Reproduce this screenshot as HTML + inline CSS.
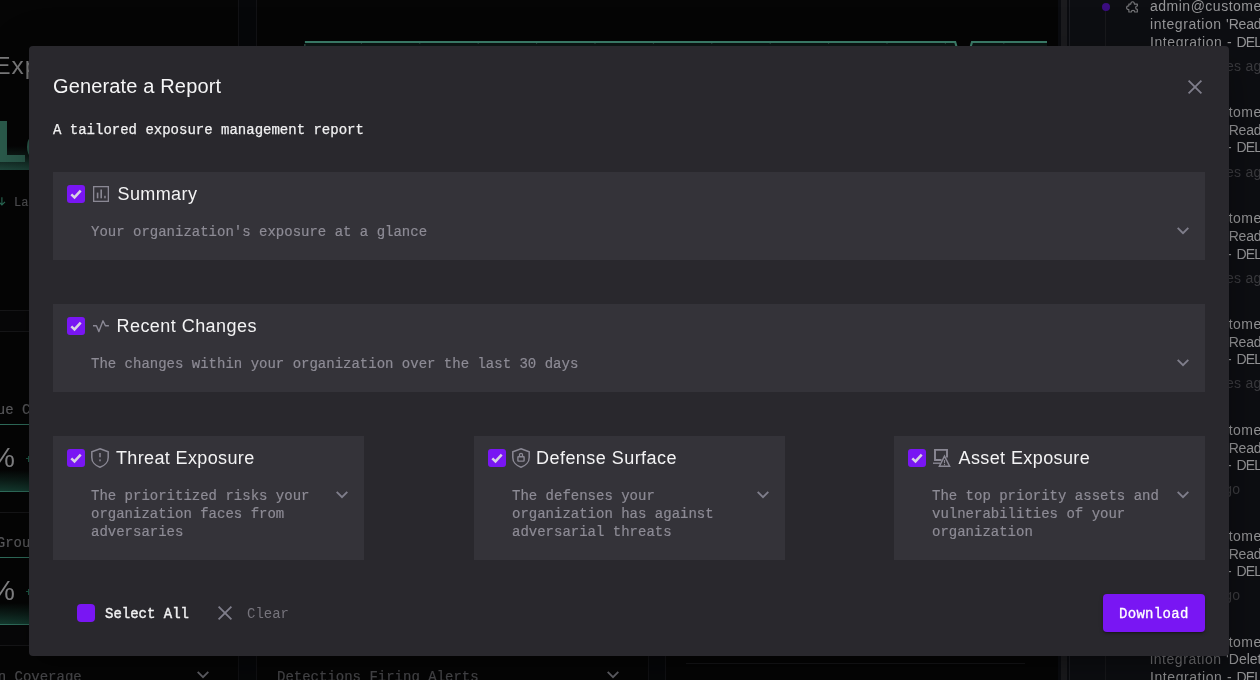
<!DOCTYPE html>
<html>
<head>
<meta charset="utf-8">
<title>Generate a Report</title>
<style>
*{box-sizing:border-box;margin:0;padding:0}
html,body{width:1260px;height:680px;overflow:hidden;background:#050505}
body{position:relative;font-family:"Liberation Sans",sans-serif;color:#eee}
.abs{position:absolute}
.mono{font-family:"Liberation Mono",monospace}
.sans{font-family:"Liberation Sans",sans-serif}
.t{position:absolute;white-space:nowrap}
/* ---------- background (dimmed dashboard) ---------- */
#bg{will-change:transform;position:absolute;left:0;top:0;width:1260px;height:680px;background:#050505;overflow:hidden}
.bgm{position:absolute;white-space:nowrap;font-family:"Liberation Mono",monospace;font-size:14px;line-height:18px;color:#4f4f52;-webkit-text-stroke:0.2px currentColor}
.gl{position:absolute;height:1px;background:#2f6e5c}
.hl{position:absolute;height:1px;background:#161618}
.vl{position:absolute;width:1px;background:#161618}
.feed{position:absolute;left:1150px;white-space:nowrap;font-family:"Liberation Sans",sans-serif;font-size:14px;line-height:18px;color:#969698;letter-spacing:0.57px}
.ago{position:absolute;white-space:nowrap;font-family:"Liberation Sans",sans-serif;font-size:14px;line-height:18px;color:#3b3b3f;letter-spacing:0.25px}
/* ---------- modal ---------- */
#modal{will-change:transform;position:absolute;left:29px;top:46px;width:1200px;height:610px;background:#29282d;border-radius:4px;box-shadow:0 11px 15px -7px rgba(0,0,0,.2),0 24px 38px 3px rgba(0,0,0,.14),0 9px 46px 8px rgba(0,0,0,.12)}
.card{position:absolute;background:#343339}
.cb{position:absolute;width:18px;height:18px;border-radius:3px;background:#7916f3}
.cb svg{position:absolute;left:0;top:0}
.ttl{position:absolute;white-space:nowrap;font-family:"Liberation Sans",sans-serif;font-size:18px;line-height:24px;letter-spacing:0.3px;color:#f3f3f4}
.desc{position:absolute;font-family:"Liberation Mono",monospace;font-size:14px;line-height:18px;color:#8d8b95;-webkit-text-stroke:0.2px #8d8b95;white-space:nowrap}
.ico{position:absolute;overflow:visible}
</style>
</head>
<body>
<div id="bg">
  <!-- left column -->
  <div class="t sans" style="left:-5.8px;top:51.3px;font-size:24.5px;line-height:30px;letter-spacing:1px;color:#7a7a7b">Exp</div>
  <div class="abs" style="left:0;top:146px;width:60px;height:23.6px;background:linear-gradient(rgba(30,72,60,0),rgba(30,72,60,.35) 45%,#1e463b)"></div>
  <div class="abs" style="left:0;top:121.3px;width:7.2px;height:40.6px;background:#2b5b4c"></div>
  <div class="abs" style="left:0;top:154.7px;width:25px;height:7.2px;background:#2b5b4c"></div>
  <div class="abs" style="left:27.2px;top:131px;width:30px;height:31.5px;border-radius:50%;border:7px solid #2b5b4c"></div>
  <svg class="ico" style="left:-3px;top:196px" width="10" height="11" viewBox="0 0 10 11"><path d="M4.9 1.2V8.8M1.8 5.8L4.9 8.9L8 5.8" stroke="#2a6b56" stroke-width="1.1" fill="none"/></svg>
  <div class="bgm" style="left:14px;top:194.5px;font-size:12px;line-height:16px;color:#525255">La</div>

  <div class="hl" style="left:0;top:310px;width:60px"></div>
  <div class="abs" style="left:0;top:311px;width:60px;height:20px;background:#070708"></div>
  <div class="hl" style="left:0;top:331px;width:60px"></div>
  <div class="bgm" style="left:-3.2px;top:400.9px;color:#5a5a5d">ue C</div>
  <div class="gl" style="left:0;top:424px;width:60px"></div>
  <div class="abs" style="left:25.5px;top:458px;width:4px;height:1.3px;background:#1d5b47"></div><div class="abs" style="left:27.9px;top:455.6px;width:1.3px;height:6px;background:#1d5b47"></div>
  <div class="t sans" style="left:-10px;top:440.5px;font-size:28px;line-height:34px;color:#858587">%</div>
  <div class="abs" style="left:0;top:469.5px;width:60px;height:21.5px;background:linear-gradient(rgba(20,58,47,0),rgba(20,58,47,.45) 50%,#143a2f)"></div>
  <div class="gl" style="left:0;top:491px;width:60px"></div>
  <div class="hl" style="left:0;top:512px;width:60px"></div>
  <div class="bgm" style="left:-3.2px;top:534.3px;color:#5a5a5d">Grou</div>
  <div class="gl" style="left:0;top:556.5px;width:60px"></div>
  <div class="abs" style="left:25.5px;top:591px;width:4px;height:1.3px;background:#1d5b47"></div><div class="abs" style="left:27.9px;top:588.6px;width:1.3px;height:6px;background:#1d5b47"></div>
  <div class="t sans" style="left:-10px;top:573.5px;font-size:28px;line-height:34px;color:#858587">%</div>
  <div class="abs" style="left:0;top:602.5px;width:60px;height:21.5px;background:linear-gradient(rgba(20,58,47,0),rgba(20,58,47,.45) 50%,#143a2f)"></div>
  <div class="gl" style="left:0;top:624px;width:60px"></div>
  <div class="abs" style="left:0;top:625px;width:238px;height:20px;background:#070708"></div>
  <div class="hl" style="left:0;top:645px;width:238px"></div>
  <div class="bgm" style="left:-2.3px;top:667.6px;color:#4b4b4e">n Coverage</div>
  <svg class="ico" style="left:197px;top:671px" width="12" height="8" viewBox="0 0 12 8"><path d="M0.7 0.9L6 6.2L11.3 0.9" stroke="#66666c" stroke-width="1.9" fill="none"/></svg>
  <svg class="ico" style="left:607px;top:671px" width="12" height="8" viewBox="0 0 12 8"><path d="M0.7 0.9L6 6.2L11.3 0.9" stroke="#66666c" stroke-width="1.9" fill="none"/></svg>

  <!-- column gap strips -->
  <div class="abs" style="left:238px;top:0;width:19px;height:680px;background:#060709;border-left:1px solid #121215;border-right:1px solid #121215"></div>
  <div class="abs" style="left:648px;top:640px;width:18px;height:40px;background:#060709;border-left:1px solid #121215;border-right:1px solid #121215"></div>
  <div class="bgm" style="left:277px;top:667.6px;color:#4b4b4e">Detections Firing Alerts</div>
  <div class="hl" style="left:686px;top:663px;width:339px"></div>

  <!-- top chart line -->
  <svg class="ico" style="left:0;top:0" width="1260" height="60" viewBox="0 0 1260 60">
    <path d="M304.8 48V42H955.4L957 48Z" fill="#0b1614"/><path d="M970.4 48L972 42H1047V48Z" fill="#0b1614"/>
    <path d="M304.8 48V44" stroke="#2b4a42" stroke-width="1.4" fill="none"/>
    <path d="M304.9 42H955.2L957 48.5M970.2 48.5L972 42H1047" stroke="#3c7e6a" stroke-width="2.1" fill="none" stroke-linejoin="miter"/>
    <rect x="360.9" y="43" width="1" height="0.9" fill="#2c4d44"/><rect x="419.3" y="43" width="1" height="0.9" fill="#2c4d44"/><rect x="477.7" y="43" width="1" height="0.9" fill="#2c4d44"/><rect x="536.1" y="43" width="1" height="0.9" fill="#2c4d44"/><rect x="594.5" y="43" width="1" height="0.9" fill="#2c4d44"/><rect x="652.9" y="43" width="1" height="0.9" fill="#2c4d44"/><rect x="711.3" y="43" width="1" height="0.9" fill="#2c4d44"/><rect x="769.7" y="43" width="1" height="0.9" fill="#2c4d44"/><rect x="828.1" y="43" width="1" height="0.9" fill="#2c4d44"/><rect x="886.5" y="43" width="1" height="0.9" fill="#2c4d44"/><rect x="944.9" y="43" width="1" height="0.9" fill="#2c4d44"/><rect x="1003.3" y="43" width="1" height="0.9" fill="#2c4d44"/>
  </svg>

  <!-- right panel -->
  <div class="abs" style="left:1058px;top:0;width:12px;height:680px;background:#0b0c10"></div>
  <div class="abs" style="left:1061px;top:0;width:6px;height:680px;background:#1b1b1e"></div>
  <div class="abs" style="left:1069px;top:0;width:191px;height:680px;background:#0d0e12;border-left:1px solid #1c1d22"></div>
  <div class="vl" style="left:1105px;top:10px;height:670px;background:#19191c"></div>
  <div class="abs" style="left:1102px;top:3px;width:8px;height:8px;border-radius:50%;background:#3b0d80"></div>
  <svg class="ico" style="left:1125px;top:0px" width="15" height="15" viewBox="0 0 15 15"><path d="M3.85 4.1H5.8A1.8 2.4 0 0 1 9.4 4.1H12.35V6A1.7 1.7 0 0 0 12.35 9.4V12H9.7A1.7 1.7 0 0 0 6.3 12H3.85V9.6A2.25 1.9 0 0 1 3.85 5.8Z" stroke="#757578" stroke-width="1.15" fill="none" stroke-linejoin="round"/></svg>
  <div class="feed" style="top:-2.8px;letter-spacing:0.5px">admin@customer.com</div>
  <div class="feed" style="top:14.8px">integration <span style="letter-spacing:-0.15px">'Read-Only</span></div>
  <div class="feed" style="top:32.5px">Integration - <span style="letter-spacing:-0.9px">DELETED</span></div>
  <div class="ago" style="left:1190.5px;top:56.6px">minutes ago</div>
  <div class="feed" style="top:103.1px;letter-spacing:0.5px">admin@customer.com</div>
  <div class="feed" style="top:120.8px">integration <span style="letter-spacing:-0.15px">'Read-Only</span></div>
  <div class="feed" style="top:138.4px">Integration - <span style="letter-spacing:-0.9px">DELETED</span></div>
  <div class="ago" style="left:1190.5px;top:162.6px">minutes ago</div>
  <div class="feed" style="top:209.1px;letter-spacing:0.5px">admin@customer.com</div>
  <div class="feed" style="top:226.7px">integration <span style="letter-spacing:-0.15px">'Read-Only</span></div>
  <div class="feed" style="top:244.5px">Integration - <span style="letter-spacing:-0.9px">DELETED</span></div>
  <div class="ago" style="left:1190.5px;top:268.5px">minutes ago</div>
  <div class="feed" style="top:314.9px;letter-spacing:0.5px">admin@customer.com</div>
  <div class="feed" style="top:332.6px">integration <span style="letter-spacing:-0.15px">'Read-Only</span></div>
  <div class="feed" style="top:350.3px">Integration - <span style="letter-spacing:-0.9px">DELETED</span></div>
  <div class="ago" style="left:1190.5px;top:374.4px">minutes ago</div>
  <div class="feed" style="top:420.8px;letter-spacing:0.5px">admin@customer.com</div>
  <div class="feed" style="top:438.5px">integration <span style="letter-spacing:-0.15px">'Read-Only</span></div>
  <div class="feed" style="top:456.2px">Integration - <span style="letter-spacing:-0.9px">DELETED</span></div>
  <div class="ago" style="left:1216.3px;top:480.3px">ago</div>
  <div class="feed" style="top:526.8px;letter-spacing:0.5px">admin@customer.com</div>
  <div class="feed" style="top:544.6px">integration <span style="letter-spacing:-0.15px">'Read-Only</span></div>
  <div class="feed" style="top:562.2px">Integration - <span style="letter-spacing:-0.9px">DELETED</span></div>
  <div class="ago" style="left:1216.3px;top:586.3px">ago</div>
  <div class="feed" style="top:632.7px;letter-spacing:0.5px">admin@customer.com</div>
  <div class="feed" style="top:650.4px"><span style="color:#737376">integration </span><span style="letter-spacing:0px">'Deleted</span></div>
  <div class="feed" style="top:668.1px">Integration - <span style="letter-spacing:-0.9px">DELETED</span></div>
  <div class="ago" style="left:1216.3px;top:692.2px">ago</div>
</div>

<div id="modal">
  <div class="t sans" style="left:24px;top:28px;font-size:20px;line-height:24px;letter-spacing:0.15px;color:#f5f5f6">Generate a Report</div>
  <svg class="ico" style="left:1159px;top:34px" width="14" height="14" viewBox="0 0 14 14"><path d="M0.6 0.6L13.4 13.4M13.4 0.6L0.6 13.4" stroke="#7f7e8b" stroke-width="1.8" fill="none"/></svg>
  <div class="t mono" style="left:24px;top:75px;font-size:14px;line-height:18px;color:#f0f0f1;-webkit-text-stroke:0.25px #f0f0f1">A tailored exposure management report</div>

  <!-- Summary -->
  <div class="card" style="left:24px;top:126px;width:1152px;height:88px">
    <div class="cb" style="left:14px;top:13px"><svg width="18" height="18" viewBox="0 0 18 18"><path d="M4.3 9.4L7.5 12.4L13.7 5.6" stroke="#d8d2e2" stroke-width="2.5" fill="none"/></svg></div>
    <svg class="ico" style="left:39px;top:13px" width="18" height="18" viewBox="0 0 18 18"><rect x="1.65" y="1.65" width="14.7" height="14.7" stroke="#8a8894" stroke-width="1.3" fill="none"/><rect x="4.8" y="7.6" width="1.6" height="5.7" fill="#8a8894"/><rect x="8.4" y="4.5" width="1.6" height="8.8" fill="#8a8894"/><rect x="12.2" y="10.8" width="1.5" height="2.5" fill="#8a8894"/></svg>
    <div class="ttl" style="left:64.5px;top:10px;letter-spacing:0.4px">Summary</div>
    <div class="desc" style="left:38px;top:51px">Your organization's exposure at a glance</div>
    <svg class="ico" style="left:1124px;top:55px" width="12" height="8" viewBox="0 0 12 8"><path d="M0.7 0.9L6 6.2L11.3 0.9" stroke="#7f7e8b" stroke-width="1.9" fill="none"/></svg>
  </div>

  <!-- Recent Changes -->
  <div class="card" style="left:24px;top:258px;width:1152px;height:88px">
    <div class="cb" style="left:14px;top:13px"><svg width="18" height="18" viewBox="0 0 18 18"><path d="M4.3 9.4L7.5 12.4L13.7 5.6" stroke="#d8d2e2" stroke-width="2.5" fill="none"/></svg></div>
    <svg class="ico" style="left:39px;top:13px" width="18" height="18" viewBox="0 0 18 18"><path d="M1 8.8H4.4L6.9 14.6L11 3.8L13.4 8.8H16.9" stroke="#8a8894" stroke-width="1.4" fill="none" stroke-linejoin="round"/></svg>
    <div class="ttl" style="left:63.5px;top:10px;letter-spacing:0.45px">Recent Changes</div>
    <div class="desc" style="left:38px;top:51px">The changes within your organization over the last 30 days</div>
    <svg class="ico" style="left:1124px;top:55px" width="12" height="8" viewBox="0 0 12 8"><path d="M0.7 0.9L6 6.2L11.3 0.9" stroke="#7f7e8b" stroke-width="1.9" fill="none"/></svg>
  </div>

  <!-- Threat Exposure -->
  <div class="card" style="left:24px;top:390px;width:311px;height:124px">
    <div class="cb" style="left:14px;top:13px"><svg width="18" height="18" viewBox="0 0 18 18"><path d="M4.3 9.4L7.5 12.4L13.7 5.6" stroke="#d8d2e2" stroke-width="2.5" fill="none"/></svg></div>
    <svg class="ico" style="left:38px;top:12px" width="18" height="20" viewBox="0 0 18 20"><path d="M9 0.8L17.2 3.7V9.4C17.2 13.8 13.8 17.7 9 19.2C4.2 17.7 0.8 13.8 0.8 9.4V3.7Z" stroke="#8a8894" stroke-width="1.5" fill="none"/><rect x="8.25" y="5" width="1.5" height="4.3" fill="#8a8894"/><rect x="8.25" y="11.4" width="1.5" height="1.9" fill="#8a8894"/></svg>
    <div class="ttl" style="left:63px;top:10px;letter-spacing:0.37px">Threat Exposure</div>
    <div class="desc" style="left:38px;top:51px">The prioritized risks your<br>organization faces from<br>adversaries</div>
    <svg class="ico" style="left:283px;top:55px" width="12" height="8" viewBox="0 0 12 8"><path d="M0.7 0.9L6 6.2L11.3 0.9" stroke="#7f7e8b" stroke-width="1.9" fill="none"/></svg>
  </div>

  <!-- Defense Surface -->
  <div class="card" style="left:445px;top:390px;width:311px;height:124px">
    <div class="cb" style="left:14px;top:13px"><svg width="18" height="18" viewBox="0 0 18 18"><path d="M4.3 9.4L7.5 12.4L13.7 5.6" stroke="#d8d2e2" stroke-width="2.5" fill="none"/></svg></div>
    <svg class="ico" style="left:38px;top:12px" width="18" height="20" viewBox="0 0 18 20"><path d="M9 0.8L17.2 3.7V9.4C17.2 13.8 13.8 17.7 9 19.2C4.2 17.7 0.8 13.8 0.8 9.4V3.7Z" stroke="#8a8894" stroke-width="1.5" fill="none"/><rect x="5.9" y="8.8" width="6.2" height="4.3" rx="0.5" stroke="#8a8894" stroke-width="1.4" fill="none"/><path d="M7.5 8.8V6.8C7.5 5.9 8.2 5.3 9 5.3C9.8 5.3 10.5 5.9 10.5 6.8V8.8" stroke="#8a8894" stroke-width="1.3" fill="none"/></svg>
    <div class="ttl" style="left:62px;top:10px;letter-spacing:0.46px">Defense Surface</div>
    <div class="desc" style="left:38px;top:51px">The defenses your<br>organization has against<br>adversarial threats</div>
    <svg class="ico" style="left:283px;top:55px" width="12" height="8" viewBox="0 0 12 8"><path d="M0.7 0.9L6 6.2L11.3 0.9" stroke="#7f7e8b" stroke-width="1.9" fill="none"/></svg>
  </div>

  <!-- Asset Exposure -->
  <div class="card" style="left:865px;top:390px;width:311px;height:124px">
    <div class="cb" style="left:14px;top:13px"><svg width="18" height="18" viewBox="0 0 18 18"><path d="M4.3 9.4L7.5 12.4L13.7 5.6" stroke="#d8d2e2" stroke-width="2.5" fill="none"/></svg></div>
    <svg class="ico" style="left:39px;top:12px" width="20" height="20" viewBox="0 0 20 20"><path d="M8.6 12H2V1.9H14V9.4" stroke="#8a8894" stroke-width="1.9" fill="none"/><path d="M0 15.2H7" stroke="#8a8894" stroke-width="1.4" fill="none"/><path d="M11.5 8.2L6.4 18.2H16.6Z" stroke="#8a8894" stroke-width="1.5" fill="#343339" stroke-linejoin="miter"/><path d="M11.5 12V15.2M11.5 16V17.2" stroke="#8a8894" stroke-width="1.1" fill="none"/></svg>
    <div class="ttl" style="left:64.5px;top:10px;letter-spacing:0.4px">Asset Exposure</div>
    <div class="desc" style="left:38px;top:51px">The top priority assets and<br>vulnerabilities of your<br>organization</div>
    <svg class="ico" style="left:283px;top:55px" width="12" height="8" viewBox="0 0 12 8"><path d="M0.7 0.9L6 6.2L11.3 0.9" stroke="#7f7e8b" stroke-width="1.9" fill="none"/></svg>
  </div>

  <!-- footer -->
  <div class="cb" style="left:48px;top:558px;border-radius:4px"></div>
  <div class="t mono" style="left:76px;top:559px;font-size:14px;line-height:18px;color:#f0f0f1;-webkit-text-stroke:0.4px #f0f0f1">Select All</div>
  <svg class="ico" style="left:189px;top:560px" width="14" height="14" viewBox="0 0 14 14"><path d="M0.6 0.6L13.4 13.4M13.4 0.6L0.6 13.4" stroke="#7f7e8b" stroke-width="1.8" fill="none"/></svg>
  <div class="t mono" style="left:218px;top:559px;font-size:14px;line-height:18px;color:#76747c">Clear</div>
  <div class="abs" style="left:1074px;top:548px;width:102px;height:38px;border-radius:4px;background:#7916f3;box-shadow:0 3px 1px -2px rgba(0,0,0,.2),0 2px 2px 0 rgba(0,0,0,.14),0 1px 5px 0 rgba(0,0,0,.12)"></div>
  <div class="t mono" style="left:1090px;top:559px;font-size:14px;line-height:18px;color:#ffffff;-webkit-text-stroke:0.3px #ffffff;letter-spacing:0.3px">Download</div>
</div>
</body>
</html>
